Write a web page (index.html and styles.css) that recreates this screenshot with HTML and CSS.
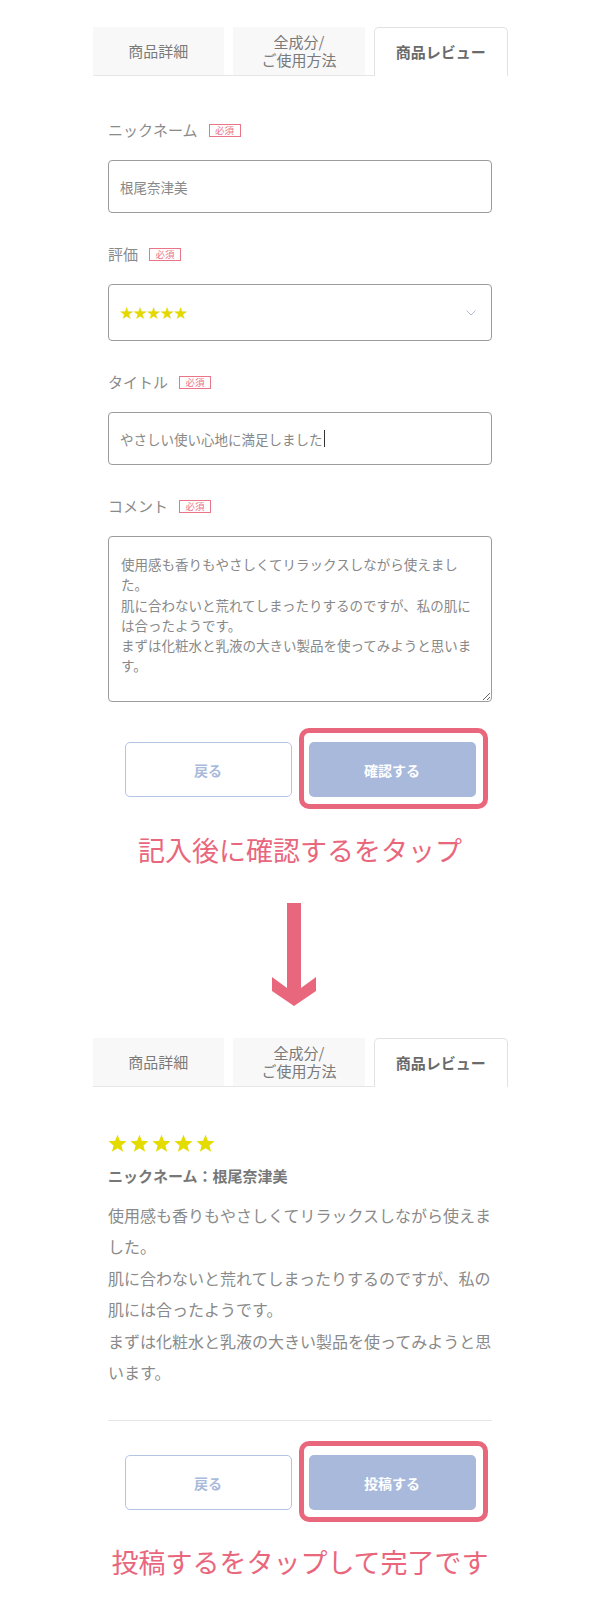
FILE: index.html
```html
<!DOCTYPE html>
<html lang="ja">
<head>
<meta charset="utf-8">
<title>商品レビュー</title>
<link rel="stylesheet" href="styles.css">
</head>
<body>
<div class="page">
  <nav class="tabs">
    <div class="tab">商品詳細</div>
    <div class="tab">全成分/<br>ご使用方法</div>
    <div class="tab tab-active">商品レビュー</div>
  </nav>

  <form class="form">
    <div class="label-row"><span class="label">ニックネーム</span><span class="badge">必須</span></div>
    <div class="field">根尾奈津美</div>

    <div class="label-row gap-top"><span class="label">評価</span><span class="badge">必須</span></div>
    <div class="field field-select">
      <span class="small-stars">★★★★★</span>
      <svg class="chevron" width="10" height="6" viewBox="0 0 10 6"><path d="M0.5 0.5 L5 5 L9.5 0.5" fill="none" stroke="#b3bfdc" stroke-width="1"/></svg>
    </div>

    <div class="label-row gap-top"><span class="label">タイトル</span><span class="badge">必須</span></div>
    <div class="field">やさしい使い心地に満足しました<span class="caret"></span></div>

    <div class="label-row gap-top"><span class="label">コメント</span><span class="badge">必須</span></div>
    <textarea class="comment" readonly>使用感も香りもやさしくてリラックスしながら使えました。
肌に合わないと荒れてしまったりするのですが、私の肌には合ったようです。
まずは化粧水と乳液の大きい製品を使ってみようと思います。</textarea>

    <div class="buttons buttons-form">
      <div class="btn btn-back">戻る</div>
      <div class="btn-wrap">
        <div class="btn btn-primary">確認する</div>
        <div class="highlight"></div>
      </div>
    </div>
  </form>

  <p class="caption caption-1">記入後に確認するをタップ</p>

  <svg class="arrow" width="46" height="103" viewBox="0 0 46 103">
    <polygon points="16,0 30,0 30,85 45,74 45,88 23,103 1,88 1,74 16,85" fill="#e9677c"/>
  </svg>

  <nav class="tabs tabs-2">
    <div class="tab">商品詳細</div>
    <div class="tab">全成分/<br>ご使用方法</div>
    <div class="tab tab-active">商品レビュー</div>
  </nav>

  <section class="review">
    <div class="stars">
      <svg width="19" height="19" viewBox="0 0 24 24"><polygon points="12,0.8 15.06,8.59 23.41,9.09 16.95,14.41 19.05,22.51 12,18 4.95,22.51 7.05,14.41 0.59,9.09 8.94,8.59"/></svg>
      <svg width="19" height="19" viewBox="0 0 24 24"><polygon points="12,0.8 15.06,8.59 23.41,9.09 16.95,14.41 19.05,22.51 12,18 4.95,22.51 7.05,14.41 0.59,9.09 8.94,8.59"/></svg>
      <svg width="19" height="19" viewBox="0 0 24 24"><polygon points="12,0.8 15.06,8.59 23.41,9.09 16.95,14.41 19.05,22.51 12,18 4.95,22.51 7.05,14.41 0.59,9.09 8.94,8.59"/></svg>
      <svg width="19" height="19" viewBox="0 0 24 24"><polygon points="12,0.8 15.06,8.59 23.41,9.09 16.95,14.41 19.05,22.51 12,18 4.95,22.51 7.05,14.41 0.59,9.09 8.94,8.59"/></svg>
      <svg width="19" height="19" viewBox="0 0 24 24"><polygon points="12,0.8 15.06,8.59 23.41,9.09 16.95,14.41 19.05,22.51 12,18 4.95,22.51 7.05,14.41 0.59,9.09 8.94,8.59"/></svg>
    </div>
    <p class="nickname">ニックネーム：根尾奈津美</p>
    <p class="review-body">使用感も香りもやさしくてリラックスしながら使えました。<br>肌に合わないと荒れてしまったりするのですが、私の肌には合ったようです。<br>まずは化粧水と乳液の大きい製品を使ってみようと思います。</p>
    <hr class="divider">
    <div class="buttons buttons-review">
      <div class="btn btn-back">戻る</div>
      <div class="btn-wrap">
        <div class="btn btn-primary">投稿する</div>
        <div class="highlight"></div>
      </div>
    </div>
  </section>

  <p class="caption caption-2">投稿するをタップして完了です</p>
</div>
</body>
</html>
```

FILE: styles.css
```css
* { box-sizing: border-box; }

html, body {
  margin: 0;
  padding: 0;
  background: #ffffff;
}

body {
  font-family: "Noto Sans CJK JP", "Noto Sans", sans-serif;
  color: #888888;
  width: 600px;
}

.page {
  padding-top: 27px;
  padding-bottom: 20px;
}

/* Tabs */
.tabs {
  width: 415px;
  margin: 0 auto;
  display: flex;
  align-items: flex-start;
  gap: 9px;
  border-bottom: 1px solid #e6e6e6;
}

.tab {
  flex: 1;
  height: 48px;
  background: #f8f8f8;
  display: flex;
  align-items: center;
  justify-content: center;
  text-align: center;
  font-size: 15px;
  line-height: 18px;
  color: #7a7a7a;
}

.tab-active {
  height: 49px;
  margin-bottom: -1px;
  background: #ffffff;
  border: 1px solid #e2e2e2;
  border-bottom: none;
  border-radius: 5px 5px 0 0;
  font-weight: bold;
  color: #6a6a6a;
  padding-bottom: 1px;
}

.tabs-2 {
  margin-top: 32px;
}

/* Form */
.form {
  width: 384px;
  margin: 44px auto 0;
}

.label-row {
  display: flex;
  align-items: center;
  gap: 11px;
  height: 20px;
}

.gap-top {
  margin-top: 31px;
}

.label {
  font-size: 15px;
  line-height: 20px;
  color: #8a8a8a;
}

.badge {
  display: inline-block;
  width: 32px;
  height: 13px;
  border: 1px solid #ea7488;
  color: #ea7488;
  font-size: 9.5px;
  line-height: 11px;
  text-align: center;
}

.field {
  margin-top: 20px;
  height: 53px;
  border: 1px solid #9c9c9c;
  border-radius: 4px;
  padding: 0 11px;
  display: flex;
  align-items: center;
  font-size: 13.5px;
  color: #888888;
}

.field-select {
  height: 57px;
  justify-content: space-between;
  padding-right: 15px;
}

.small-stars {
  color: #e4d800;
  font-size: 13.5px;
  line-height: 1;
}

.chevron {
  display: block;
  margin-top: 1px;
}

.caret {
  display: inline-block;
  width: 1px;
  height: 17px;
  background: #333333;
  margin-left: 1px;
}

.comment {
  display: block;
  margin-top: 20px;
  width: 384px;
  height: 166px;
  border: 1px solid #9c9c9c;
  border-radius: 4px;
  padding: 17px 12px;
  font-family: "Noto Sans CJK JP", "Noto Sans", sans-serif;
  font-size: 13.5px;
  line-height: 20.3px;
  color: #888888;
  background: #ffffff;
  outline: none;
  overflow: hidden;
}

/* Buttons */
.buttons {
  display: flex;
  justify-content: center;
  gap: 17px;
}

.buttons-form {
  margin-top: 40px;
}

.buttons-review {
  margin-top: 34px;
}

.btn {
  width: 167px;
  height: 55px;
  border-radius: 5px;
  display: flex;
  align-items: center;
  justify-content: center;
  font-size: 14px;
  font-weight: bold;
}

.btn-back {
  border: 1px solid #b4c5e4;
  color: #a9badb;
  background: #ffffff;
}

.btn-primary {
  background: #a8b9db;
  color: #ffffff;
}

.btn-wrap {
  position: relative;
}

.highlight {
  position: absolute;
  top: -14px;
  left: -10px;
  right: -12px;
  bottom: -12px;
  border: 5px solid #e9677c;
  border-radius: 10px;
}

/* Captions */
.caption {
  margin: 0;
  text-align: center;
  font-size: 27px;
  line-height: 36px;
  color: #e9677c;
}

.caption-1 {
  margin-top: 35px;
}

.caption-2 {
  margin-top: 34px;
}

.arrow {
  display: block;
  margin: 35px 0 0 calc(50% - 29px);
}

/* Review */
.review {
  width: 384px;
  margin: 47px auto 0;
}

.stars {
  display: flex;
  gap: 3px;
  height: 18px;
  align-items: center;
  fill: #e4dc00;
}

.stars svg {
  display: block;
}

.nickname {
  margin: 13px 0 0;
  font-size: 15px;
  line-height: 22px;
  font-weight: bold;
  color: #777777;
}

.review-body {
  margin: 13px 0 0;
  font-size: 16px;
  line-height: 31.4px;
  color: #8a8a8a;
}

.divider {
  margin: 32px 0 0;
  border: none;
  border-top: 1px solid #e6e6e6;
  height: 0;
}
```
